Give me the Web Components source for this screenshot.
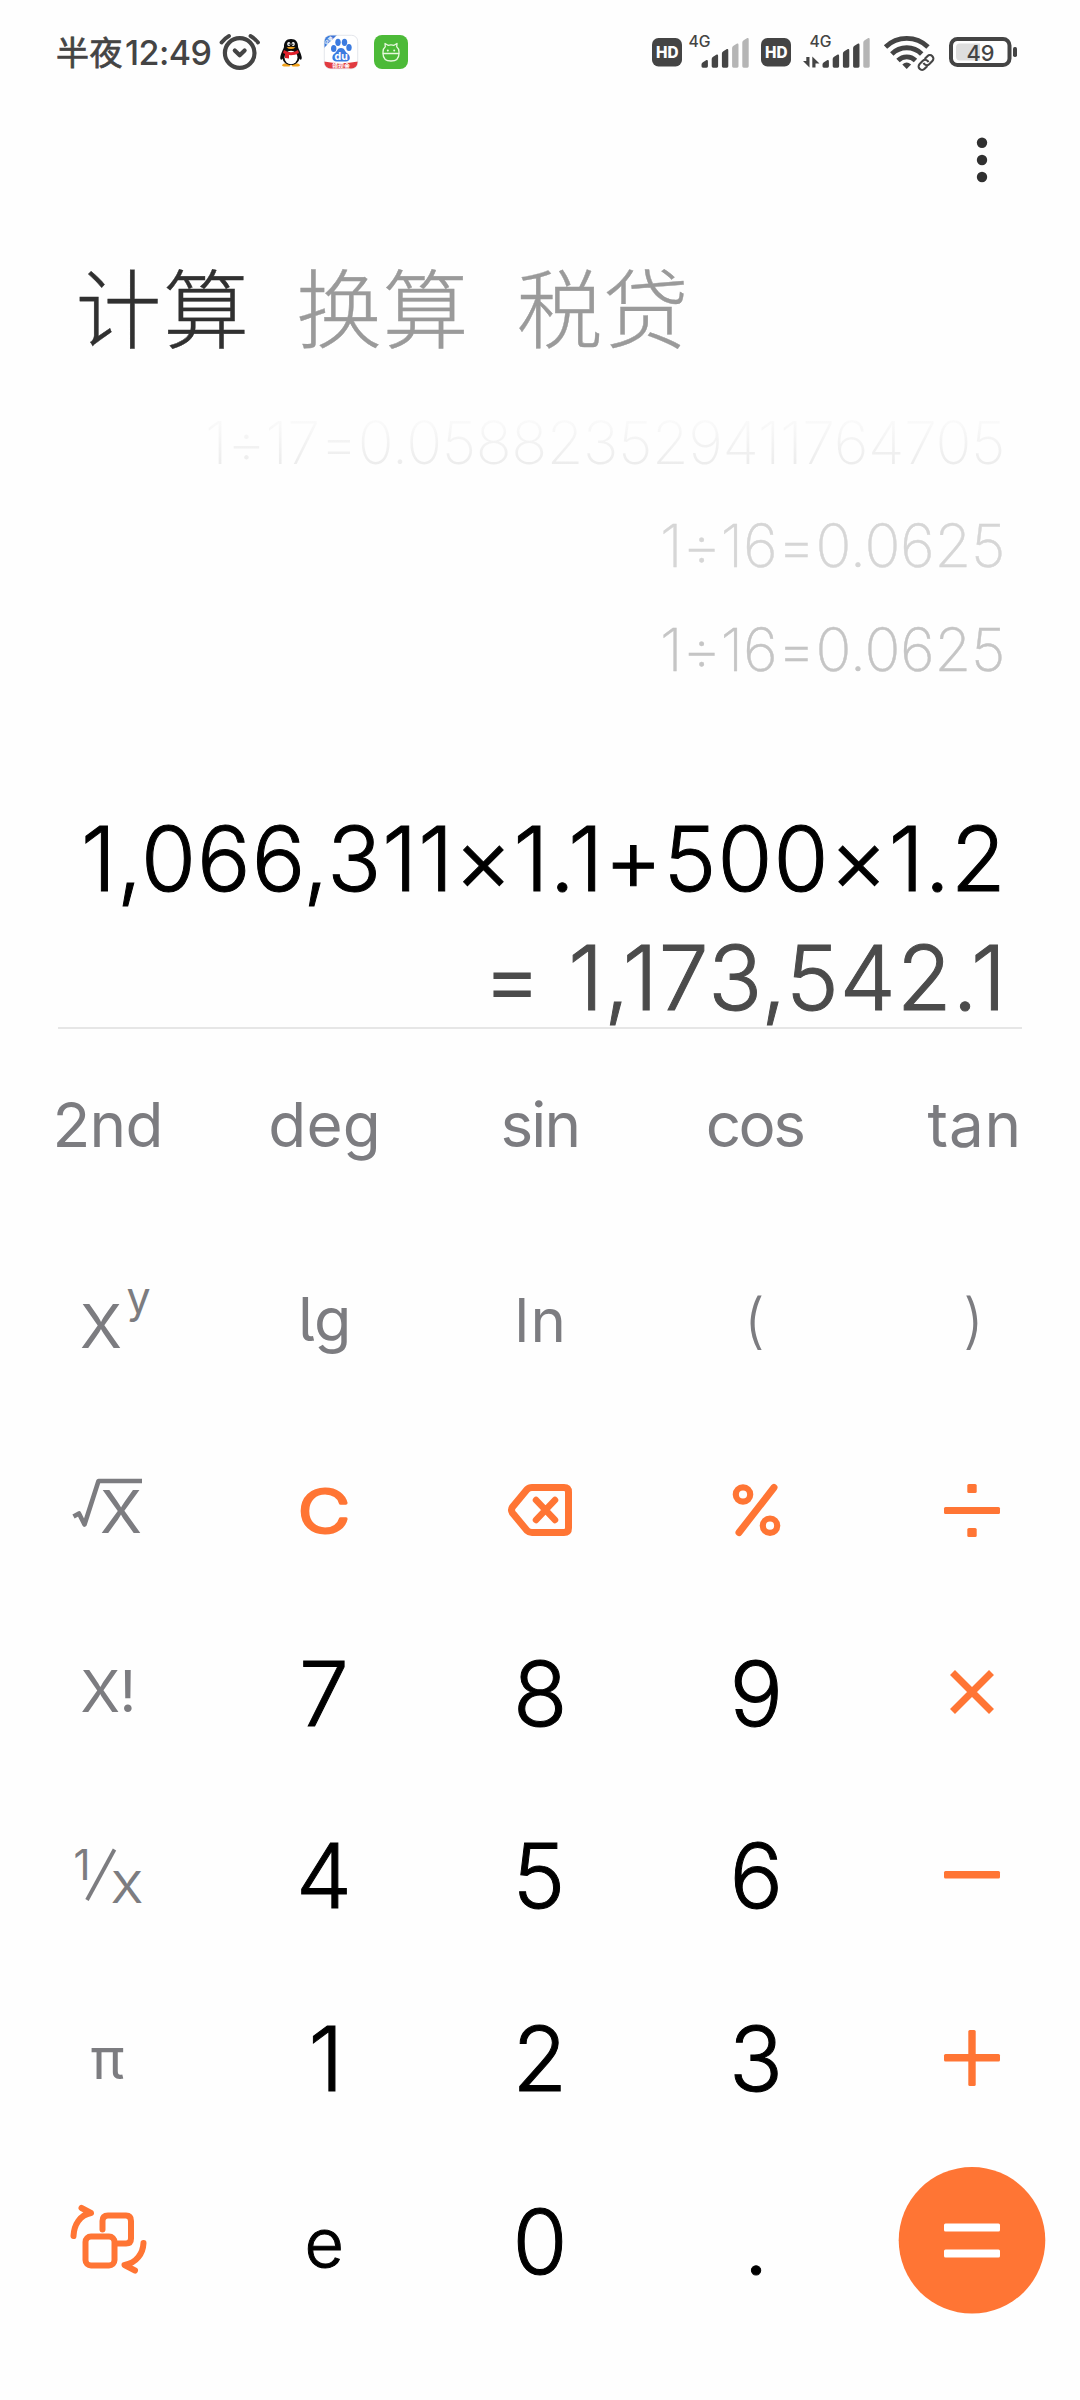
<!DOCTYPE html>
<html lang="zh-CN">
<head>
<meta charset="utf-8">
<title>计算器</title>
<style>
html,body{margin:0;background:#fefefe}
body{width:1080px;height:2400px;overflow:hidden;font-family:Inter,"Noto Sans CJK SC",sans-serif}
</style>
</head>
<body>
<calc-app></calc-app>
<script>
const FAMILY = 'Inter, "Noto Sans CJK SC", sans-serif';
const ctx = document.createElement('canvas').getContext('2d');

// One line of text whose ink is tracked to fill exactly `w` pixels.
class InkText extends HTMLElement {
  connectedCallback() {
    const size = +this.getAttribute('size'), weight = this.getAttribute('weight') || 400;
    const family = this.getAttribute('family') || FAMILY;
    const text = this.textContent;
    ctx.font = `${weight} ${size}px ${family}`;
    const m = ctx.measureText(text);
    const ink = m.actualBoundingBoxLeft + m.actualBoundingBoxRight;
    const w = +this.getAttribute('w') || ink;
    const ls = text.length > 1 ? (w - ink) / (text.length - 1) : 0;
    this.attachShadow({mode: 'open'}).innerHTML = `<style>
      :host{display:block;flex:none;width:${w}px;height:${size}px;
        font:${weight} ${size}px/${size}px ${family.replace(/"/g, "'")};letter-spacing:${ls}px;white-space:nowrap}
      span{display:block;margin-left:${m.actualBoundingBoxLeft}px;width:max-content}
      </style><span><slot></slot></span>`;
  }
}

class StatusBar extends HTMLElement {
  constructor() {
    super();
    const bars = (x, lit) => [60, 54.5, 49, 43.5, 38].map((t, i) => {
      const l = x + i * 10.2, w = 6.4;
      return `<path d="M${l} ${t+4.5}Q${l} ${t+3} ${l+1.4} ${t+2.3}L${l+w-1.4} ${t}Q${l+w} ${t-.4} ${l+w} ${t+1.4}V66.3Q${l+w} 67.7 ${l+w-1.4} 67.7H${l+1.4}Q${l} 67.7 ${l} 66.3Z" fill="${i < lit ? '#444' : '#b5b5b5'}"/>`;
    }).join('');
    const hd = x => `<svg width="30" height="40" viewBox="${x} 33 30 40"><rect x="${x}" y="38" width="30" height="28.5" rx="6.5" fill="#444"/><text x="${x+4}" y="57.8" font-size="15.5" font-weight="800" fill="#fefefe" textLength="22.5" lengthAdjust="spacingAndGlyphs">HD</text></svg>`;
    this.attachShadow({mode: 'open'}).innerHTML = `<style>
      :host{display:flex;align-items:center;height:40px;padding:33px 0 0 57px;color:#444}
      svg{display:block;flex:none;overflow:visible}
      </style>
      <ink-text size="33" weight="400" w="64.5" style="-webkit-text-stroke:.7px #444;margin-top:-3px" family='"Noto Sans CJK SC", sans-serif'>半夜</ink-text>
      <ink-text size="34" weight="500" w="84.5" style="margin-left:4.5px">12:49</ink-text>
      <svg style="margin-left:8.5px" width="42" height="40" viewBox="219 33 42 40" fill="none" stroke="#444" stroke-width="4.2" stroke-linecap="round" stroke-linejoin="round">
        <circle cx="239.700" cy="53" r="14.800"/><path d="M221.500 42.500Q224.500 38.500 229 36M250.500 36Q255 38.500 258 42.500" stroke-width="3.800"/><path d="M234.800 50.500L239.700 55.300 244.600 50.500"/></svg>
      <svg style="margin-left:17px" width="26" height="40" viewBox="278 33 26 40">
        <path d="M284 63.500Q280 65.500 284 66.500H289.500L291 64.500 292.500 66.500H298Q302 65.500 298 63.500Z" fill="#f2a21c"/>
        <path d="M291 39C286 39 283.800 42.500 284 47C283.500 49 280.800 53.500 280.300 57C280 60 281.500 60.500 282.500 58.500C283.500 62.500 286.500 65 291 65S298.500 62.500 299.500 58.500C300.500 60.500 302 60 301.700 57C301.200 53.500 298.500 49 298 47C298.200 42.500 296 39 291 39Z" fill="#0b0b0d"/>
        <ellipse cx="291" cy="57.500" rx="6.500" ry="6.800" fill="#fff"/>
        <path d="M284 50Q291 54.500 298 50L299 53Q291 57.500 283 53Z" fill="#e0202c"/><path d="M285 53.500L289 54.500V58.500L285 58Z" fill="#e0202c"/>
        <ellipse cx="288.800" cy="44" rx="1.600" ry="2.100" fill="#fff"/><ellipse cx="293.200" cy="44" rx="1.600" ry="2.100" fill="#fff"/><circle cx="289.200" cy="44.300" r=".7"/><circle cx="292.800" cy="44.300" r=".7"/>
        <path d="M286.500 47.500Q291 46.200 295.500 47.500Q291 50.500 286.500 47.500Z" fill="#f6a51e"/></svg>
      <svg style="margin-left:20px" width="34" height="40" viewBox="324 33 34 40">
        <defs><clipPath id="c"><rect x="324.500" y="35.500" width="33" height="33" rx="6"/></clipPath></defs>
        <rect x="324.300" y="35.300" width="33.400" height="33.400" rx="6" fill="#fff" stroke="#d9dbe2" stroke-width=".7"/>
        <g clip-path="url(#c)"><path d="M324 35H337L324 48Z" fill="#3f78d8"/>
        <text transform="translate(326.500 45.500) rotate(-45)" font-size="5" font-weight="700" fill="#fff">记录</text>
        <path d="M324 61.500Q341 65 358 61.500V69H324Z" fill="#e13b40"/><text x="341" y="67.800" font-size="6" text-anchor="middle" font-weight="700" fill="#fff">领现金</text></g>
        <g fill="#3b7be0"><ellipse cx="333.700" cy="48.500" rx="2.700" ry="3.600"/><ellipse cx="338" cy="42.300" rx="2.700" ry="3.600"/><ellipse cx="344.500" cy="42.300" rx="2.700" ry="3.600"/><ellipse cx="349" cy="47.500" rx="2.700" ry="3.600"/>
        <path d="M341 48C337 48 337.500 51.500 334.500 53.500C331 56 332 61.500 336.500 61.500H346C350.500 61.500 351 56 347.500 53.500C344.500 51.500 345 48 341 48Z"/></g>
        <text x="341.200" y="60.300" font-size="10.500" font-weight="700" text-anchor="middle" fill="#fff">du</text></svg>
      <svg style="margin-left:16px" width="34" height="40" viewBox="374 33 34 40">
        <rect x="374" y="35" width="34" height="34" rx="8" fill="#4cba38"/>
        <g fill="none" stroke="#e8f8df" stroke-width="1.300" stroke-linejoin="round"><path d="M383 53.500H399V52Q399 48.500 396.700 46.800L397 43.500 394 45.300Q391 44.300 388 45.300L385 43.500 385.300 46.800Q383 48.500 383 52Z"/><path d="M383 53.500Q383 61 391 61T399 53.500"/></g><circle cx="387.800" cy="50.500" r="1" fill="#e8f8df"/><circle cx="394.200" cy="50.500" r="1" fill="#e8f8df"/></svg>
      <div style="flex:1"></div>
      ${hd(652)}
      <svg style="margin-left:6px" width="62" height="44" viewBox="688 31 62 44"><text x="688.500" y="47.400" font-size="15.500" font-weight="500" fill="#444" textLength="22" lengthAdjust="spacingAndGlyphs">4G</text>${bars(701.500, 3)}</svg>
      <span style="width:11px"></span>
      ${hd(761)}
      <svg style="margin-left:10px" width="70" height="44" viewBox="801 31 70 44"><text x="809.500" y="47.400" font-size="15.500" font-weight="500" fill="#444" textLength="22" lengthAdjust="spacingAndGlyphs">4G</text><path d="M809.500 57V67.500L803 61H806.300V57ZM812.300 67.500V56.500L819.500 63.500H815.500V67.500Z" fill="#444"/>${bars(822.500, 4)}</svg>
      <svg style="margin-left:13px" width="52" height="40" viewBox="884 33 52 40" fill="none" stroke="#444">
        <path d="M885.500 47A30.500 30.500 0 0 1 928 47M891.800 54A21 21 0 0 1 921.700 54M898 60.500A12.500 12.500 0 0 1 915.500 60.500" stroke-width="4.800"/>
        <path d="M902.300 64.500Q906.700 60.500 911.100 64.500L906.700 69Z" fill="#444" stroke="none"/>
        <g transform="rotate(-45 926 62.500)"><rect x="915.500" y="57" width="21" height="11" fill="#fefefe" stroke="none"/><path d="M924.500 66H920.500A3.500 3.500 0 0 1 920.500 59H925A3.500 3.500 0 0 1 928 64M927.500 59H931.500A3.500 3.500 0 0 1 931.500 66H927A3.500 3.500 0 0 1 924 61" stroke-width="2.100"/></g></svg>
      <svg style="margin:0 62px 0 12px" width="70" height="40" viewBox="948 33 70 40">
        <path d="M960 43.500H980V60.500H960Q956 60.500 956 56.500V47.500Q956 43.500 960 43.500Z" fill="#dedede"/>
        <rect x="951" y="39" width="58.500" height="26" rx="6.500" fill="none" stroke="#444" stroke-width="4"/><rect x="1013" y="47" width="4" height="10" rx="1.700" fill="#444"/>
        <text x="980.500" y="60.600" text-anchor="middle" font-size="22" font-weight="500" fill="#444" textLength="28" lengthAdjust="spacingAndGlyphs">49</text></svg>`;
  }
}

class AppHeader extends HTMLElement {
  constructor() {
    super();
    this.attachShadow({mode: 'open'}).innerHTML = `<style>
      :host{display:block}
      .menu{display:flex;justify-content:flex-end;height:64px;padding:55px 90px 0 0}
      nav{display:flex;gap:54px;padding:70px 0 0 79.500px;height:97px;color:#9a9a9a;-webkit-text-stroke:.4px}
      .on{color:#303030}
      </style>
      <div class="menu"><svg width="16" height="64" viewBox="0 0 16 64" fill="#303030"><circle cx="8" cy="14.800" r="5.200"/><circle cx="8" cy="32" r="5.200"/><circle cx="8" cy="49" r="5.200"/></svg></div>
      <nav><ink-text class="on" size="86" weight="200" w="165.500" family='"Noto Sans CJK SC", sans-serif'>计算</ink-text>
      <ink-text size="86" weight="200" w="165.500" family='"Noto Sans CJK SC", sans-serif'>换算</ink-text>
      <ink-text size="86" weight="200" w="165.500" family='"Noto Sans CJK SC", sans-serif'>税贷</ink-text></nav>`;
  }
}

class CalcDisplay extends HTMLElement {
  constructor() {
    super();
    this.attachShadow({mode: 'open'}).innerHTML = `<style>
      :host{display:flex;flex-direction:column;align-items:flex-end;height:669.500px;padding:0 78px 0 0;box-sizing:border-box}
      .h{display:flex;align-items:center;height:104px}
      .h1{color:transparent;background:linear-gradient(#fafafa 28%,#ececec 72%);background-clip:text;-webkit-background-clip:text}
      .h2,.h3{-webkit-text-stroke:.4px}
      .h2{color:#d6d6d6}.h3{color:#c5c5c5}
      .e{display:flex;align-items:center;height:120px;color:#000;-webkit-text-stroke:1px}
      .line{flex:none;width:964px;height:2px;background:#e6e6e6;margin:-11px -20px 0 0}
      </style>
      <div class="h h1" style="margin-top:32px"><ink-text size="59.500" weight="200" w="794">1÷17=0.058823529411764705</ink-text></div>
      <div class="h h2"><ink-text size="59.500" weight="200" w="339">1÷16=0.0625</ink-text></div>
      <div class="h h3"><ink-text size="59.500" weight="200" w="339">1÷16=0.0625</ink-text></div>
      <div class="e" style="margin:98px 3px 0 0"><ink-text size="89" weight="300" w="914">1,066,311×1.1+500×1.2</ink-text></div>
      <div class="e" style="margin-right:4px;color:#4b4b4b"><ink-text size="89" weight="300" w="505">= 1,173,542.1</ink-text></div>
      <div class="line"></div>`;
  }
}

class CalcKey extends HTMLElement {
  constructor() {
    super();
    this.attachShadow({mode: 'open'}).innerHTML = `<style>
      :host{display:flex;align-items:center;justify-content:center;min-width:0}
      :host([tone=fn]){color:#7c7c80}
      :host([tone=num]){color:#000;-webkit-text-stroke:1px}
      :host([tone=op]){color:#ff7534}
      </style><slot></slot>`;
  }
}

class CalcPad extends HTMLElement {
  constructor() {
    super();
    const t = (s, w, size = 62, weight = 400, st = '') => `<calc-key tone="fn"><ink-text size="${size}" weight="${weight}" ${w ? `w="${w}"` : ''} style="${st}">${s}</ink-text></calc-key>`;
    const n = (s) => `<calc-key tone="num"><ink-text size="89" weight="300" style="margin-top:2px">${s}</ink-text></calc-key>`;
    const o = (s, tone = 'op') => `<calc-key tone="${tone}"><svg width="160" height="150" viewBox="-80 -75 160 150" fill="none" stroke="currentColor" stroke-width="7" stroke-linecap="round" stroke-linejoin="round">${s}</svg></calc-key>`;
    this.attachShadow({mode: 'open'}).innerHTML = `<style>
      :host{display:grid;grid-template-columns:repeat(5,216px);grid-template-rows:192px 198px repeat(5,182.600px)}
      svg{display:block;flex:none;overflow:visible}
      svg text{fill:currentColor;stroke:none}
      .tail{font-feature-settings:"cv05"}
      </style>
      ${t('2nd',103)}${t('deg',105.500)}${t('sin',73)}${t('cos',94.500)}${t('tan',89)}
      ${o('<text x="-28" y="28" font-size="61" font-weight="400" textLength="42" lengthAdjust="spacingAndGlyphs">X</text><text x="18.500" y="-7" font-size="43" font-weight="400">y</text>','fn')}
      ${t('lg',0,61).replace('<ink-text','<ink-text class="tail"')}${t('ln',43,60)}${t('(',0,60,300)}${t(')',0,60,300)}
      ${o('<path d="M-34.500 6.500L-29 3.500 -23.500 14.500 -9.500 -29H34" stroke-width="4.600" stroke-linecap="butt"/><text x="-8" y="22.700" font-size="58.500" font-weight="400" textLength="42" lengthAdjust="spacingAndGlyphs">X</text>','fn')}
      ${o('<text x="-26" y="22.500" font-size="61" font-weight="300" style="stroke:currentColor;stroke-width:3.200" textLength="52" lengthAdjust="spacingAndGlyphs">C</text>')}
      ${o('<path d="M-8 -22.500H24Q28.500 -22.500 28.500 -18V18Q28.500 22.500 24 22.500H-8Q-11 22.500 -13 20.500L-27.500 3Q-29.500 0 -27.500 -3L-13 -20.500Q-11 -22.500 -8 -22.500Z"/><path d="M-4 -10L15 10M15 -10L-4 10" stroke-width="6.500"/>')}
      ${o('<circle cx="-13" cy="-15.500" r="7.200" stroke-width="6.200"/><circle cx="14" cy="15.700" r="7.200" stroke-width="6.200"/><path d="M18 -22.500L-17 22.500"/>')}
      ${o('<g fill="currentColor" stroke="none"><rect x="-28" y="-3" width="56" height="7" rx="1.500"/><rect x="-4.700" y="-26" width="9.400" height="9" rx="1.500"/><rect x="-4.700" y="18" width="9.400" height="9" rx="1.500"/></g>')}
      ${t('X!',51,58,400,'margin-top:-2px;margin-left:-2px')}${n('7')}${n('8')}${n('9')}
      ${o('<path d="M-19.500 -19.500L19.500 19.500M19.500 -19.500L-19.500 19.500" stroke-width="7" stroke-linecap="butt"/>')}
      ${o('<text x="-34.500" y="5" font-size="42" font-weight="400">1</text><path d="M6.500 -25.500L-21 25" stroke-width="3.800" stroke-linecap="butt"/><text x="3" y="27.700" font-size="43.500" font-weight="400" textLength="32" lengthAdjust="spacingAndGlyphs">X</text>','fn')}
      ${n('4')}${n('5')}${n('6')}
      ${o('<rect x="-28" y="-4" width="56" height="7.500" rx="1.500" fill="currentColor" stroke="none"/>')}
      ${t('π',33,56,400,'margin-top:3px')}${n('1')}${n('2')}${n('3')}
      ${o('<g fill="currentColor" stroke="none"><rect x="-28" y="-4" width="56" height="7.500" rx="1.500"/><rect x="-3.700" y="-28" width="7.400" height="56" rx="1.500"/></g>')}
      ${o('<g stroke-width="6"><path d="M-15.500 -4V-12.500Q-15.500 -18 -10 -18H8Q13 -18 13 -12.500V5Q13 10 8 10H-1"/><rect x="-32.500" y="3" width="29" height="29" rx="5.500"/><path d="M-44.500 2.500C-44 -9 -38 -18.500 -27 -20.500L-36.500 -25.500M25.500 9.500C25 20 18.500 29.500 6.500 31.500L17 37"/></g>').replace('viewBox="-80 -75','viewBox="-90 -68.500')}
      ${t('e',0,68,300,'margin-top:3px').replace('tone="fn"','tone="num"')}${n('0')}${n('.')}
      ${o('<circle cy=".3" r="73.300" fill="currentColor" stroke="none"/><g fill="#fff" stroke="none"><rect x="-28" y="-16.500" width="56" height="8" rx="1.500"/><rect x="-28" y="9.500" width="56" height="8" rx="1.500"/></g>')}`;
  }
}

class CalcApp extends HTMLElement {
  constructor() {
    super();
    this.attachShadow({mode: 'open'}).innerHTML = `<style>:host{display:flex;flex-direction:column;width:1080px;height:2400px;background:#fefefe}</style>
      <status-bar></status-bar><app-header></app-header><calc-display></calc-display><calc-pad></calc-pad>`;
  }
}
customElements.define('ink-text', InkText);
customElements.define('status-bar', StatusBar);
customElements.define('app-header', AppHeader);
customElements.define('calc-display', CalcDisplay);
customElements.define('calc-key', CalcKey);
customElements.define('calc-pad', CalcPad);
customElements.define('calc-app', CalcApp);
</script>
</body>
</html>
